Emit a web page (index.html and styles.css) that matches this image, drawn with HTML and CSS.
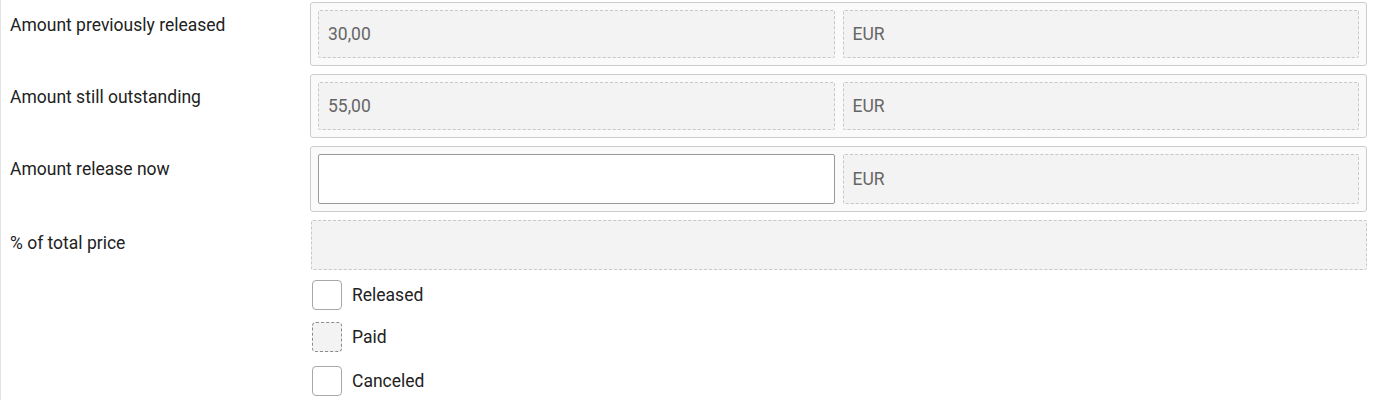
FILE: index.html
```html
<!DOCTYPE html>
<html>
<head>
<meta charset="utf-8">
<link rel="stylesheet" href="styles.css">
</head>
<body>
<div class="form">
  <div class="row">
    <div class="label">Amount previously released</div>
    <div class="group">
      <div class="field ro">30,00</div>
      <div class="field ro">EUR</div>
    </div>
  </div>
  <div class="row">
    <div class="label">Amount still outstanding</div>
    <div class="group">
      <div class="field ro">55,00</div>
      <div class="field ro">EUR</div>
    </div>
  </div>
  <div class="row">
    <div class="label">Amount release now</div>
    <div class="group tall">
      <input class="field input" type="text">
      <div class="field ro">EUR</div>
    </div>
  </div>
  <div class="row">
    <div class="label">% of total price</div>
    <div class="field ro wide"></div>
  </div>
  <div class="row checks">
    <div class="label"></div>
    <div class="checklist">
      <label class="check"><span class="box"></span><span>Released</span></label>
      <label class="check"><span class="box disabled"></span><span>Paid</span></label>
      <label class="check"><span class="box"></span><span>Canceled</span></label>
    </div>
  </div>
</div>
</body>
</html>
```
FILE: styles.css
```css
html, body {
  margin: 0;
  padding: 0;
  background: #fff;
}
body {
  font-family: Roboto, "Liberation Sans", sans-serif;
  font-size: 17.5px;
  color: #222;
}
.form {
  border-left: 1px solid #e3e3e3;
  padding: 2px 8px 0 0;
  min-height: 398px;
  display: flex;
  flex-direction: column;
  gap: 8px;
}
.row {
  display: grid;
  grid-template-columns: 309px 1fr;
  align-items: start;
}
.label {
  padding: 13px 0 0 9px;
  line-height: 21px;
}
.group {
  display: grid;
  grid-template-columns: 1fr 1fr;
  gap: 8px;
  padding: 7px;
  border: 1px solid #cdcdcd;
  border-radius: 3px;
  background: #fafafa;
}
.group.tall .field {
  height: 50px;
}
.field {
  box-sizing: border-box;
  height: 48px;
  padding: 0 9px;
  display: flex;
  align-items: center;
  color: #666;
  font-size: 17.5px;
  border-radius: 2px;
}
.ro {
  border: 1px dashed #c8c8c8;
  background: #f3f3f3;
}
.input {
  border: 1px solid #9a9a9a;
  background: #fff;
  font-family: inherit;
  margin: 0;
  outline: none;
}
.wide {
  height: 50px;
  margin-left: 1px;
}
.checks {
  margin-top: 2px;
}
.checklist {
  display: flex;
  flex-direction: column;
  gap: 12px;
  padding-left: 2px;
}
.check {
  display: flex;
  align-items: center;
  gap: 10px;
  color: #222;
  height: 30px;
}
.check:last-child {
  margin-top: 2px;
}
.box {
  box-sizing: border-box;
  width: 30px;
  height: 30px;
  border: 1px solid #a8a8a8;
  border-radius: 4px;
  background: #fff;
}
.box.disabled {
  border: 1px dashed #8a8a8a;
  background: #f3f3f3;
}
```
